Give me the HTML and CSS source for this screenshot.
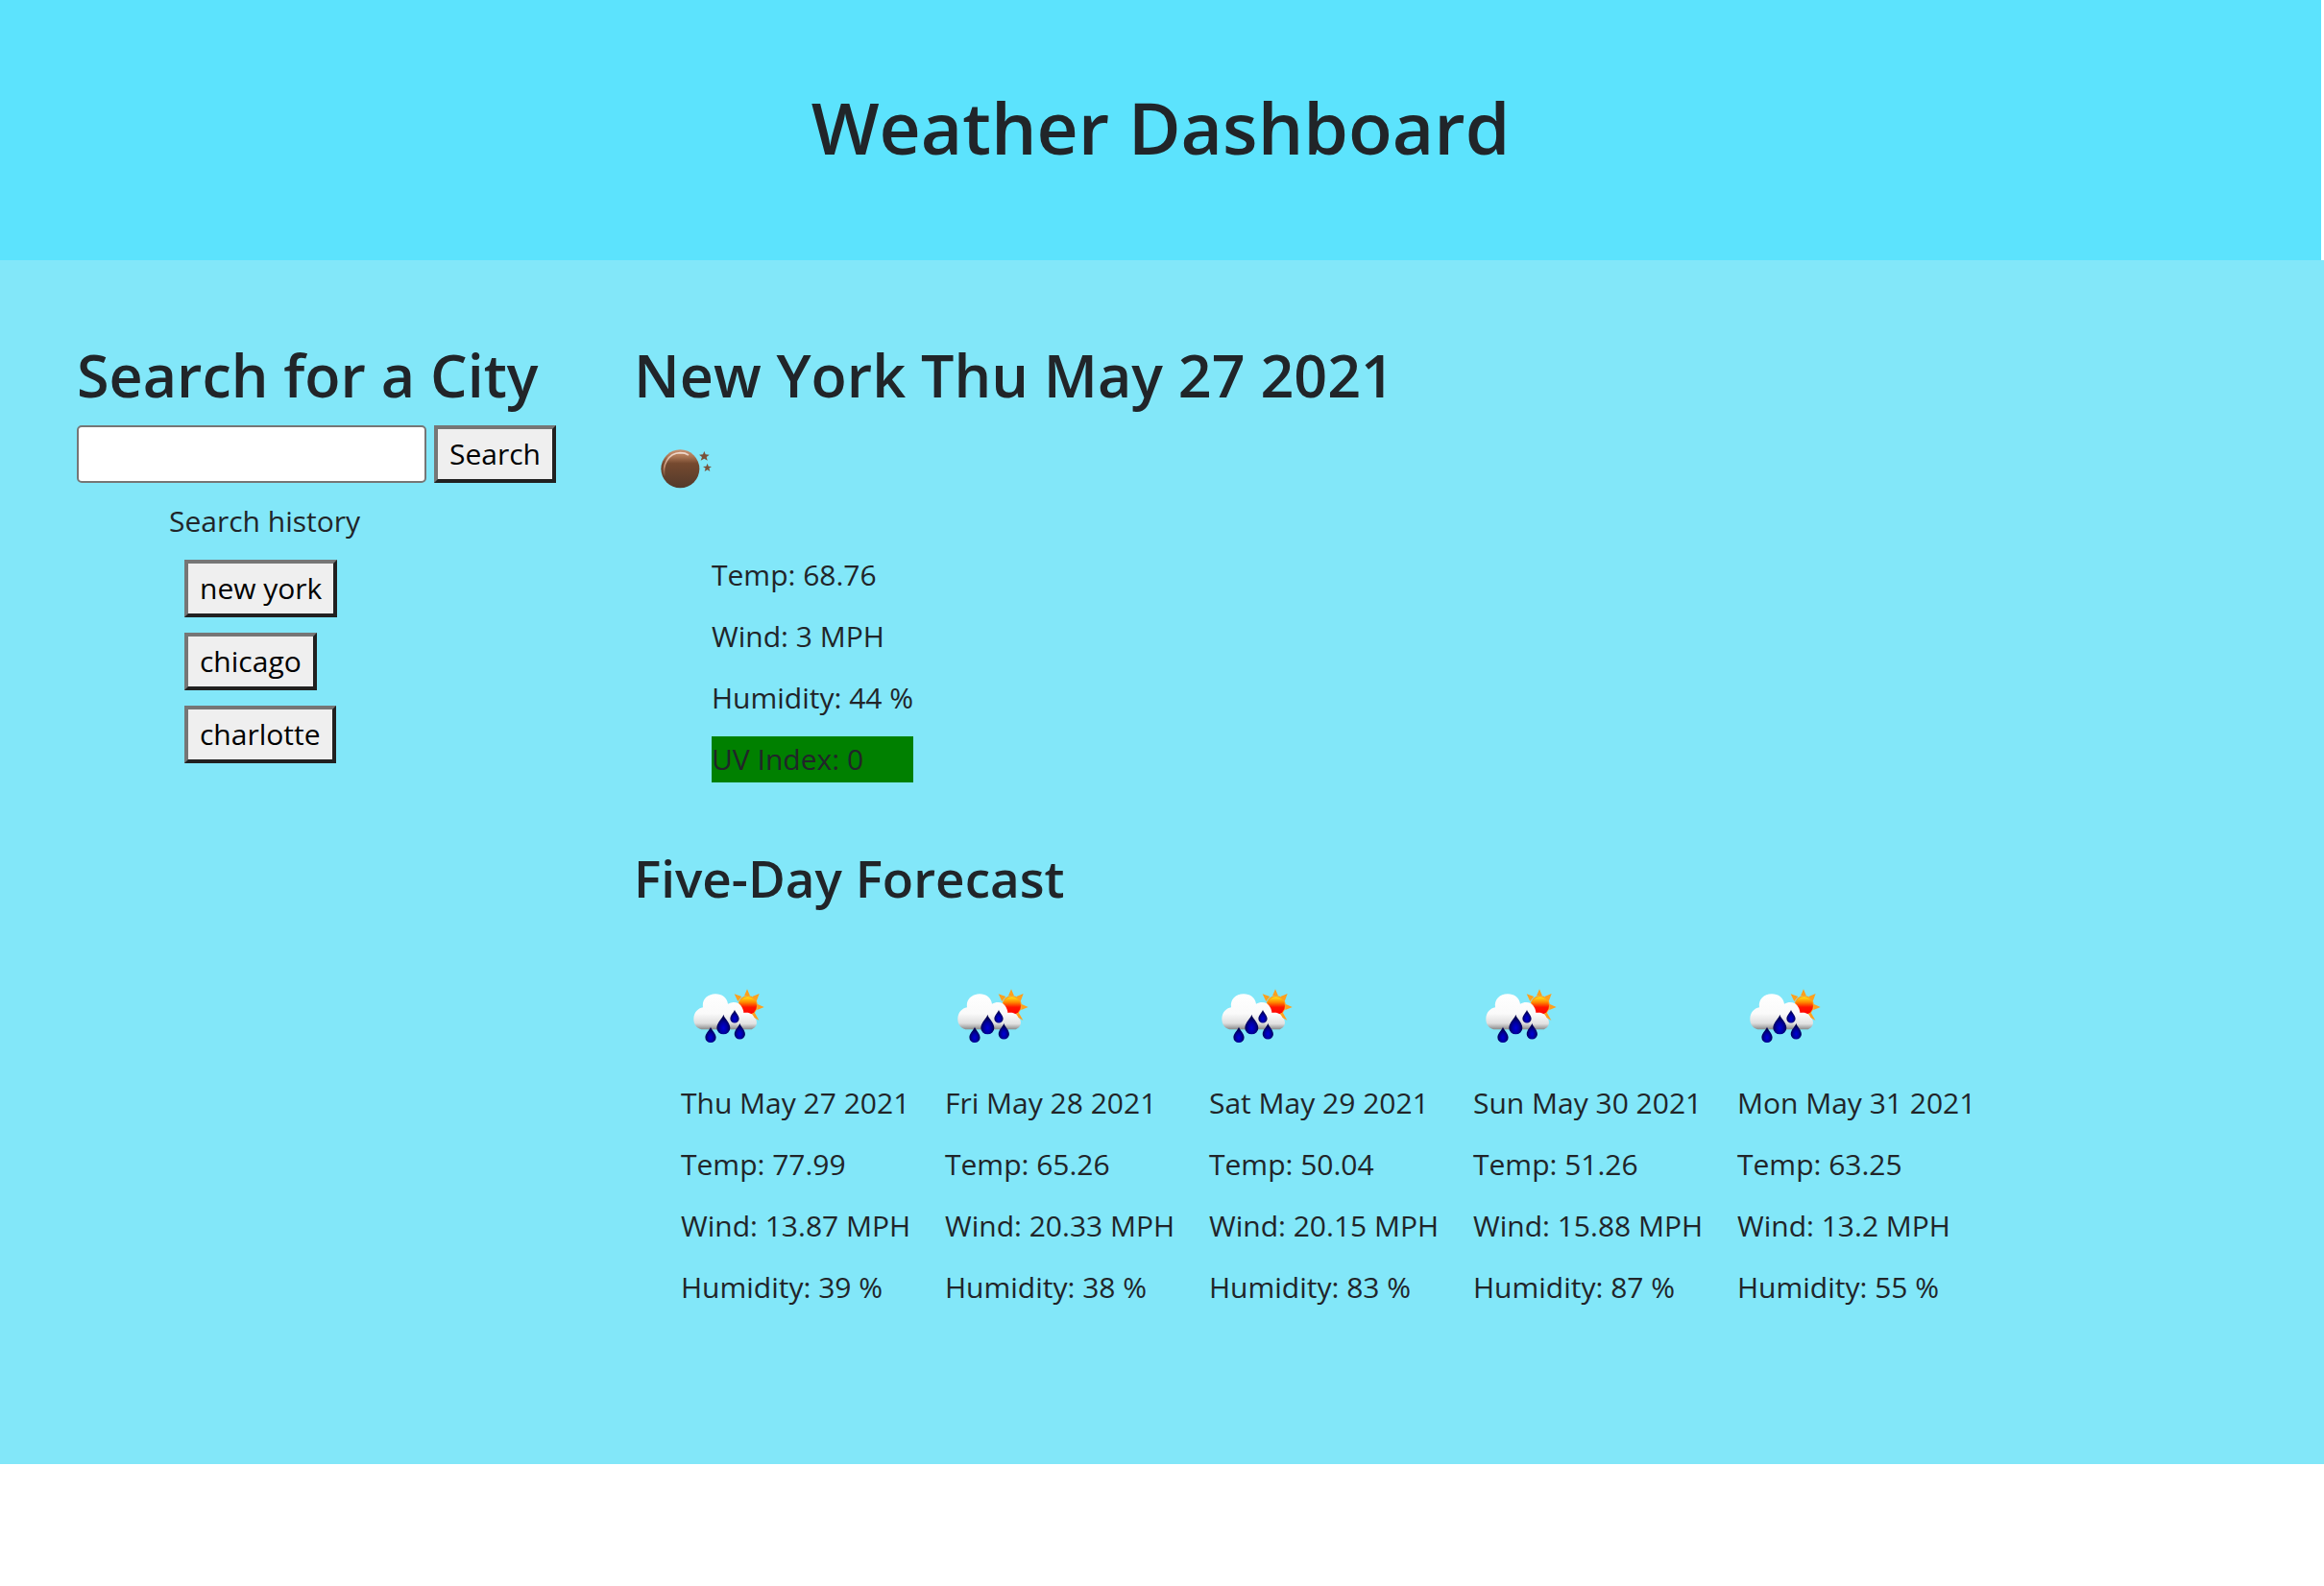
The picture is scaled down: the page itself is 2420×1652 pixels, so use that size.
FILE: index.html
```html
<!DOCTYPE html>
<html lang="en">
<head>
<meta charset="utf-8">
<title>Weather Dashboard</title>
<link rel="stylesheet" href="styles.css">
</head>
<body>
<svg class="defs" aria-hidden="true">
  <defs>
    <linearGradient id="cloud-fill" gradientUnits="userSpaceOnUse" x1="0" y1="76" x2="0" y2="188">
      <stop offset="0" stop-color="#fff"/>
      <stop offset=".55" stop-color="#fafafa"/>
      <stop offset=".82" stop-color="#dedede"/>
      <stop offset="1" stop-color="#858585"/>
    </linearGradient>
    <linearGradient id="puff-fill" gradientUnits="userSpaceOnUse" x1="0" y1="134" x2="0" y2="188">
      <stop offset="0" stop-color="#fff"/>
      <stop offset=".65" stop-color="#e2e2e2"/>
      <stop offset="1" stop-color="#858585"/>
    </linearGradient>
    <linearGradient id="sun-fill" x1="0" y1="0" x2="0" y2="1">
      <stop offset="0" stop-color="#ffe21a"/>
      <stop offset=".3" stop-color="#ff8a00"/>
      <stop offset=".58" stop-color="#ff1500"/>
      <stop offset="1" stop-color="#f00"/>
    </linearGradient>
    <radialGradient id="drop-fill" cx=".5" cy=".68" r=".5">
      <stop offset="0" stop-color="#0000d8"/>
      <stop offset=".5" stop-color="#0000a4"/>
      <stop offset="1" stop-color="#000052"/>
    </radialGradient>
    <linearGradient id="moon-fill" x1="0" y1="0" x2="0" y2="1">
      <stop offset="0" stop-color="#c99272"/>
      <stop offset=".16" stop-color="#b07a58"/>
      <stop offset=".36" stop-color="#75492f"/>
      <stop offset="1" stop-color="#533a2b"/>
    </linearGradient>
    <linearGradient id="moon-shine" x1="0" y1="0" x2="0" y2="1">
      <stop offset="0" stop-color="#f0dace"/>
      <stop offset=".6" stop-color="#c08a6a"/>
      <stop offset="1" stop-color="#5a3c2a"/>
    </linearGradient>
    <path id="drop" d="M0-33C2-22 21-8 21 9A21 20 0 0 1-21 9C-21-8-2-22 0-33Z"/>
    <symbol id="rain" viewBox="27 -3 300 300">
      <path fill="#ffa01e" d="M225 82l9-21 9 21zM250 84l22-9-9 24zM265 107l22 10-22 9zM256 132l15 26-25-13zM194 76l23 8-12 15z"/>
      <circle cx="236" cy="112" r="31" fill="#ffa01e"/>
      <circle cx="236" cy="113" r="28" fill="url(#sun-fill)"/>
      <path fill="url(#cloud-fill)" d="M96 118C92 94 110 76 135 76C156 76 171 88 174 107C191 98 211 102 218 118C225 130 226 150 221 166L221 187H98C78 187 66 171 67 152C68 134 80 121 96 118Z"/>
      <path fill="url(#puff-fill)" d="M207 150C211 131 248 128 256 149C267 157 267 176 253 184C250 187 247 187 243 187H200Z"/>
      <g fill="url(#drop-fill)">
        <use href="#drop" transform="translate(160 173)"/>
        <use href="#drop" transform="translate(120 205) scale(.8 .8)"/>
        <use href="#drop" transform="translate(211 194) scale(.8 .82)"/>
        <use href="#drop" transform="translate(195 147) scale(.66 .67)"/>
      </g>
    </symbol>
    <symbol id="clear-night" viewBox="60 0 300 300">
      <circle cx="205" cy="148" r="60" fill="url(#moon-fill)"/>
      <path fill="none" stroke="url(#moon-shine)" stroke-width="5" d="M157 174C147 137 167 99 205 98C216 98 224 100 231 105"/>
      <path fill="#795139" d="M280 93l4 10 12 1-9 7 3 11-10-6-11 6 4-11-9-7 12-1zM290 131l3 9 10 1-8 5 3 10-8-5-9 5 3-10-8-5 10-1z"/>
    </symbol>
  </defs>
</svg>

<header class="banner">
  <h1 class="banner-title">Weather Dashboard</h1>
</header>

<div class="dashboard">
  <aside class="search">
    <h2 class="heading" id="search-title">Search for a City</h2>
    <form class="search-form">
      <input class="search-input" type="text" aria-labelledby="search-title">
      <button class="button" type="button">Search</button>
    </form>
    <section class="history">
      <p class="history-title">Search history</p>
      <ul class="history-list">
        <li><button class="button" type="button">new york</button></li>
        <li><button class="button" type="button">chicago</button></li>
        <li><button class="button" type="button">charlotte</button></li>
      </ul>
    </section>
  </aside>

  <main class="weather">
    <h2 class="heading">New York Thu May 27 2021</h2>
    <svg class="icon" role="img" aria-label="Clear night"><use href="#clear-night"/></svg>
    <div class="current">
      <p>Temp: 68.76</p>
      <p>Wind: 3 MPH</p>
      <p>Humidity: 44 %</p>
      <p class="uv">UV Index: 0</p>
    </div>
    <h3 class="subheading">Five-Day Forecast</h3>
    <div class="forecast">
      <div class="day">
        <svg class="icon" role="img" aria-label="Rain"><use href="#rain"/></svg>
        <p>Thu May 27 2021</p><p>Temp: 77.99</p><p>Wind: 13.87 MPH</p><p>Humidity: 39 %</p>
      </div>
      <div class="day">
        <svg class="icon" role="img" aria-label="Rain"><use href="#rain"/></svg>
        <p>Fri May 28 2021</p><p>Temp: 65.26</p><p>Wind: 20.33 MPH</p><p>Humidity: 38 %</p>
      </div>
      <div class="day">
        <svg class="icon" role="img" aria-label="Rain"><use href="#rain"/></svg>
        <p>Sat May 29 2021</p><p>Temp: 50.04</p><p>Wind: 20.15 MPH</p><p>Humidity: 83 %</p>
      </div>
      <div class="day">
        <svg class="icon" role="img" aria-label="Rain"><use href="#rain"/></svg>
        <p>Sun May 30 2021</p><p>Temp: 51.26</p><p>Wind: 15.88 MPH</p><p>Humidity: 87 %</p>
      </div>
      <div class="day">
        <svg class="icon" role="img" aria-label="Rain"><use href="#rain"/></svg>
        <p>Mon May 31 2021</p><p>Temp: 63.25</p><p>Wind: 13.2 MPH</p><p>Humidity: 55 %</p>
      </div>
    </div>
  </main>
</div>
</body>
</html>
```
FILE: styles.css
```css
* {
  box-sizing: border-box;
}

body {
  margin: 0;
  background: #fff;
  color: #212529;
  font-family: "Open Sans", "Noto Sans", sans-serif;
  font-size: 30px;
  line-height: 48px;
}

p,
h1,
h2,
h3,
ul {
  margin: 0;
  padding: 0;
}

.defs {
  position: absolute;
  width: 0;
  height: 0;
}

.banner {
  margin-right: 3px;
  padding: 84px 80px 91px;
  background: #5ce3fd;
  text-align: center;
}

.banner-title {
  font-size: 75px;
  font-weight: 600;
  line-height: 96px;
}

.dashboard {
  display: flex;
  padding: 80px 80px 160px;
  background: #82e7f9;
}

.search {
  flex: 0 0 580px;
}

.heading {
  padding-bottom: 12px;
  font-size: 61px;
  font-weight: 600;
  line-height: 80px;
}

.search-form {
  display: flex;
  gap: 8px;
}

.search-input {
  width: 364px;
  height: 60px;
  padding: 4px 8px;
  border: 2px solid #767676;
  border-radius: 5px;
  background: #fff;
  font: inherit;
}

.button {
  display: block;
  height: 60px;
  padding: 0 12px;
  border: 4px solid;
  border-color: #767676 #212121 #212121 #767676;
  background: #efefef;
  color: #000;
  font: inherit;
  line-height: 48px;
}

.history {
  padding: 16px 0 0 96px;
}

.history-list {
  display: grid;
  gap: 16px;
  padding: 16px 0 0 16px;
  list-style: none;
}

.weather .heading {
  padding-bottom: 8px;
}

.icon {
  display: block;
  width: 100px;
  height: 100px;
}

.current {
  display: grid;
  gap: 16px;
  width: max-content;
  padding: 36px 0 0 81px;
}

.uv {
  background: #008000;
}

.subheading {
  padding-top: 64px;
  font-size: 53px;
  font-weight: 600;
  line-height: 72px;
}

.forecast {
  display: grid;
  grid-template-columns: repeat(5, 275px);
  padding: 58px 0 0 49px;
}

.day {
  display: grid;
  gap: 16px;
}
```
